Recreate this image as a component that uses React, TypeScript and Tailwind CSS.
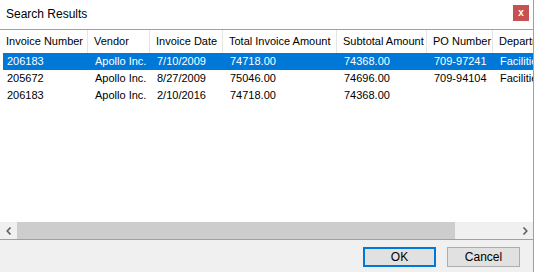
const columns = [
  { label: 'Invoice Number', width: 88 },
  { label: 'Vendor', width: 62 },
  { label: 'Invoice Date', width: 73 },
  { label: 'Total Invoice Amount', width: 114 },
  { label: 'Subtotal Amount', width: 90 },
  { label: 'PO Number', width: 66 },
  { label: 'Department', width: 90 },
]

const rows = [
  ['206183', 'Apollo Inc.', '7/10/2009', '74718.00', '74368.00', '709-97241', 'Facilities'],
  ['205672', 'Apollo Inc.', '8/27/2009', '75046.00', '74696.00', '709-94104', 'Facilities'],
  ['206183', 'Apollo Inc.', '2/10/2016', '74718.00', '74368.00', '', ''],
]

export default function App() {
  return (
    <div
      style={{ fontFamily: "'Liberation Sans', Arial, sans-serif" }}
      className="w-[535px] h-[272px] bg-white overflow-hidden text-black"
    >
      <div className="w-[534px] h-[272px] flex flex-col border-r border-[#a0a0a0]">
        {/* Title bar */}
        <div className="h-[30px] flex items-center justify-between border-b border-[#a0a0a0] pl-[6px] pr-[4px] shrink-0">
          <span className="text-[12px] -mt-[2px]">Search Results</span>
          <div className="w-[16px] h-[16px] bg-[#c75050] flex items-center justify-center -mt-[3px]">
            <span className="text-white text-[10px] font-bold leading-none -mt-[1px]">x</span>
          </div>
        </div>

        {/* List */}
        <div className="flex-1 overflow-hidden text-[11px]">
          <div className="flex h-[23px] items-center">
            {columns.map((c, i) => (
              <div
                key={c.label}
                style={{ width: c.width }}
                className={`shrink-0 h-full flex items-center whitespace-nowrap overflow-hidden pl-[6px] ${
                  i < columns.length - 1 ? 'border-r border-[#e5e5e5]' : ''
                }`}
              >
                {c.label}
              </div>
            ))}
          </div>
          {rows.map((r, ri) => (
            <div
              key={ri}
              className={`flex h-[17px] items-center ml-[3px] ${ri === 0 ? 'bg-[#0078d7] text-white' : ''}`}
            >
              {r.map((cell, ci) => (
                <div
                  key={ci}
                  style={{ width: ci === 0 ? columns[ci].width - 3 : columns[ci].width }}
                  className={`shrink-0 whitespace-nowrap overflow-hidden ${ci === 0 ? 'pl-[4px]' : 'pl-[7px]'}`}
                >
                  {cell}
                </div>
              ))}
            </div>
          ))}
        </div>

        {/* Horizontal scrollbar */}
        <div className="h-[17px] flex bg-[#f0f0f0] shrink-0">
          <div className="w-[17px] flex items-center justify-center">
            <svg width="6" height="8" viewBox="0 0 6 8">
              <path d="M4.5 0.5 L1.2 4 L4.5 7.5" fill="none" stroke="#606060" strokeWidth="1.6" />
            </svg>
          </div>
          <div className="w-[438px] bg-[#cdcdcd]" />
          <div className="flex-1" />
          <div className="w-[17px] flex items-center justify-center">
            <svg width="6" height="8" viewBox="0 0 6 8">
              <path d="M1.5 0.5 L4.8 4 L1.5 7.5" fill="none" stroke="#606060" strokeWidth="1.6" />
            </svg>
          </div>
        </div>

        {/* Footer */}
        <div className="h-[33px] border-t border-[#a0a0a0] bg-[#f0f0f0] flex justify-end items-start pt-[7px] pr-[13px] gap-[11px] shrink-0 text-[12px]">
          <button className="w-[73px] h-[20px] border-2 border-[#0078d7] bg-[#e1e1e1] flex items-center justify-center">
            OK
          </button>
          <button className="w-[73px] h-[20px] border border-[#adadad] bg-[#e1e1e1] flex items-center justify-center">
            Cancel
          </button>
        </div>
      </div>
    </div>
  )
}
